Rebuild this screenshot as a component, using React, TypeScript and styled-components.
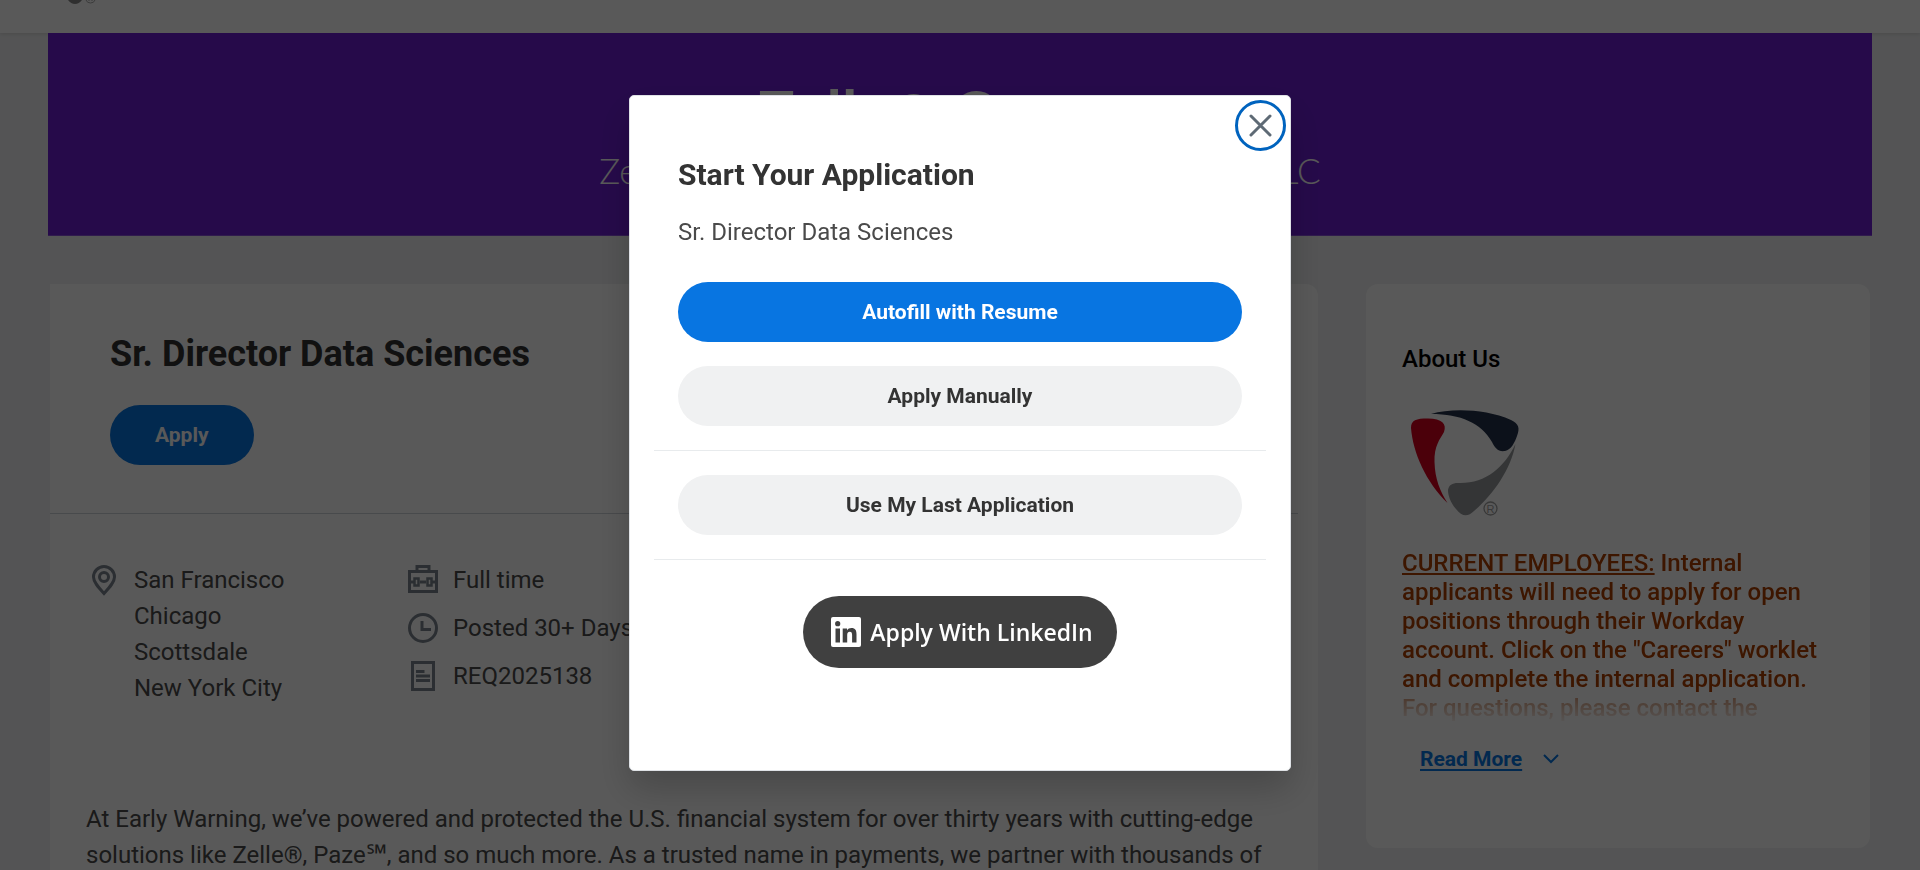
import React from "react";
import styled, { createGlobalStyle } from "styled-components";

const GlobalStyle = createGlobalStyle`
  *, *::before, *::after { box-sizing: border-box; }
  html, body, #root { height: 100%; }
  body {
    margin: 0;
    overflow: hidden;
    background: #f0f1f2;
    color: #4a4a4a;
    font: 400 24px/36px Roboto, "Liberation Sans", sans-serif;
  }
  h1, h2, h3, p, ul { margin: 0; padding: 0; }
  ul { list-style: none; }
  button { font-family: inherit; cursor: pointer; }
`;

const Page = styled.div`
  height: 100%;
  overflow: hidden;
`;

const Header = styled.header`
  height: 33px;
  padding-left: 64px;
  background: #fff;
  box-shadow: 0 1px 4px rgba(0, 0, 0, 0.12);
`;

const HeaderMark = styled.svg`
  display: block;
`;

const Banner = styled.section`
  height: 203px;
  margin: 0 48px;
  padding-top: 42px;
  background: #6d1ed4;
  border-bottom: 1px solid #8a4fdc;
  color: #fff;
  text-align: center;
`;

const BannerTitle = styled.h1`
  font: 700 62px/72px Lato, sans-serif;
`;

const Registered = styled.span`
  font-size: 56px;
  line-height: 1;
`;

const BannerText = styled.p`
  font: 300 35px/46px Lato, sans-serif;
`;

const Columns = styled.div`
  display: grid;
  grid-template-columns: minmax(0, 1268fr) minmax(0, 504fr);
  align-items: start;
  gap: 48px;
  padding: 48px 50px 0;
`;

const JobCard = styled.main`
  background: #fff;
  border-radius: 0 12px 0 0;
`;

const JobHeader = styled.div`
  height: 230px;
  margin-right: 20px;
  padding: 46px 60px 0;
  border-bottom: 1px solid #ced3d9;
`;

const JobTitle = styled.h2`
  margin-bottom: 27px;
  color: #333;
  font-size: 36px;
  font-weight: 700;
  line-height: 48px;
`;

const Pill = styled.button<{ $primary?: boolean; $wide?: boolean }>`
  display: block;
  width: ${(p) => (p.$wide ? "100%" : "auto")};
  height: 60px;
  padding: 0 45px;
  border: 0;
  border-radius: 30px;
  background: ${(p) => (p.$primary ? "#0875e1" : "#f0f1f2")};
  color: ${(p) => (p.$primary ? "#fff" : "#333")};
  font-size: 21px;
  font-weight: 700;
`;

const Facts = styled.div`
  display: flex;
  padding: 48px 36px 95px;
`;

const FactColumn = styled.ul`
  display: flex;
  flex-direction: column;
  gap: 12px;
  width: 319px;
`;

const Fact = styled.li`
  display: flex;
  gap: 12px;
  white-space: nowrap;
`;

const FactIcon = styled.svg`
  flex: none;
  width: 36px;
  height: 36px;
  fill: none;
  stroke: #7b858f;
  stroke-width: 3;
`;

const Body = styled.p`
  padding: 0 36px;
`;

const ServiceMark = styled.span`
  font-family: "DejaVu Serif", serif;
  font-size: 26px;
  line-height: 1;
`;

const Sidebar = styled.aside`
  height: 564px;
  padding: 57px 36px;
  background: #fff;
  border-radius: 12px;
`;

const SideTitle = styled.h3`
  margin-bottom: 24px;
  color: #000;
  font-size: 24px;
  font-weight: 500;
`;

const SideLogo = styled.svg`
  display: block;
  width: 150px;
  height: 130px;
  margin-bottom: 18px;
`;

const Notice = styled.p`
  height: 180px;
  margin-bottom: 12px;
  overflow: hidden;
  color: #b04000;
  font-weight: 500;
  line-height: 29px;
  mask-image: linear-gradient(#000 143px, rgba(0, 0, 0, 0.5) 148px, transparent 176px);
`;

const ReadMore = styled.button`
  display: flex;
  align-items: center;
  gap: 20px;
  height: 36px;
  padding: 0 18px;
  border: 0;
  background: none;
  color: #0875e1;
  font-size: 21px;
  font-weight: 700;
  text-decoration: underline;
  text-decoration-thickness: 2px;
  text-underline-offset: 3px;
`;

const Overlay = styled.div`
  position: fixed;
  inset: 0;
  display: flex;
  align-items: flex-start;
  justify-content: center;
  padding-top: 95px;
  background: rgba(0, 0, 0, 0.65);
`;

const Dialog = styled.div`
  position: relative;
  width: 662px;
  padding: 59px 48px 102px;
  border: 1px solid #dfe2e6;
  border-radius: 5px;
  background: #fff;
  box-shadow: 0 18px 36px rgba(0, 0, 0, 0.2);
`;

const CloseButton = styled.button`
  position: absolute;
  top: 4px;
  right: 4px;
  display: grid;
  place-items: center;
  width: 51px;
  height: 51px;
  padding: 0;
  border: 3px solid #0063be;
  border-radius: 50%;
  background: #fff;
`;

const DialogTitle = styled.h2`
  margin-bottom: 19px;
  color: #333;
  font-size: 30px;
  font-weight: 700;
  line-height: 40px;
`;

const Choices = styled.div`
  display: flex;
  flex-direction: column;
  gap: 24px;
  margin-top: 32px;
`;

const Divider = styled.hr`
  width: 612px;
  height: 1px;
  margin: 0 -24px;
  border: 0;
  background: #e8ebed;
`;

const LinkedInButton = styled.button`
  display: flex;
  align-items: center;
  align-self: center;
  gap: 9px;
  height: 72px;
  margin-top: 12px;
  padding: 0 24px 0 28px;
  border: 0;
  border-radius: 36px;
  background: #404040;
  color: #fff;
  font: 600 23px/30px "Open Sans", sans-serif;
`;

const cities = ["San Francisco", "Chicago", "Scottsdale", "New York City"];

const PinIcon = () => (
  <FactIcon viewBox="0 0 36 36" aria-hidden="true">
    <path d="M18 31.500C12 25 7.500 20 7.500 15a10.500 10.500 0 0 1 21 0C28.500 20 24 25 18 31.500Z" />
    <circle cx="18" cy="15" r="4.500" />
  </FactIcon>
);

const BriefcaseIcon = () => (
  <FactIcon viewBox="0 0 36 36" aria-hidden="true">
    <path d="M4.500 9.500h27v20h-27zM12 9V4.500h12V9M4 20h6M15 20h6M26 20h6" />
    <path d="M9.500 16.500h4v7h-4zM22.500 16.500h4v7h-4z" strokeWidth="2.500" />
  </FactIcon>
);

const ClockIcon = () => (
  <FactIcon viewBox="0 0 36 36" aria-hidden="true">
    <circle cx="18" cy="18" r="13.500" />
    <path d="M17 11v8.500h9" />
  </FactIcon>
);

const DocumentIcon = () => (
  <FactIcon viewBox="0 0 36 36" aria-hidden="true">
    <path d="M7.500 4.500h21v27h-21zM11 13.500h8.500M11 18h14M11 22.500h14" />
  </FactIcon>
);

const CompanyLogo = () => (
  <SideLogo viewBox="12 1 150 130" role="img" aria-label="Early Warning">
    <path fill="#d8001f" d="M21 28C21 20 26 18.500 38 18.500C52 18.500 57 24 54 32C50 39 44 46 44.500 62C45 79 50 91 57.500 103C36 82 23 53 21 28Z" />
    <path fill="#24324c" d="M41 14C62 8 96 9 121 20C129 24 130 28 127 36C125 42 121 50 115 51C108 52 105 48 102 42C91 23 71 14 41 14Z" />
    <path fill="#96999c" d="M125.500 44C121 69 103 95 84 111C78 117 72 117 66 109C60 102 58 95 58 90C59 85 62 83 68 83C95 84 114 68 125.500 44Z" />
    <circle cx="100.500" cy="108.500" r="6.500" fill="none" stroke="#a0a0a0" strokeWidth="1.300" />
    <text x="100.500" y="112.500" fill="#a0a0a0" fontFamily="Liberation Sans" fontSize="11" textAnchor="middle">R</text>
  </SideLogo>
);

export default function App() {
  return (
    <>
      <GlobalStyle />
      <Page>
        <Header>
          <HeaderMark width="40" height="6" aria-hidden="true">
            <path d="M4 0h14q-3 4-7 4t-7-4Z" fill="#888" />
            <path d="M22 0q1 3 4.500 3t4.500-3M25 0v1M28 0v1" fill="none" stroke="#aaa" />
          </HeaderMark>
        </Header>
        <Banner>
          <BannerTitle>Zelle<Registered>®</Registered> Careers</BannerTitle>
          <BannerText>Zelle is operated by Early Warning Services, LLC</BannerText>
        </Banner>
        <Columns>
          <JobCard>
            <JobHeader>
              <JobTitle>Sr. Director Data Sciences</JobTitle>
              <Pill type="button" $primary>Apply</Pill>
            </JobHeader>
            <Facts>
              <FactColumn>
                <Fact>
                  <PinIcon />
                  <ul>
                    {cities.map((city) => (
                      <li key={city}>{city}</li>
                    ))}
                  </ul>
                </Fact>
              </FactColumn>
              <FactColumn>
                <Fact><BriefcaseIcon />Full time</Fact>
                <Fact><ClockIcon />Posted 30+ Days Ago</Fact>
                <Fact><DocumentIcon />REQ2025138</Fact>
              </FactColumn>
            </Facts>
            <Body>
              At Early Warning, we’ve powered and protected the U.S. financial system for over thirty
              years with cutting-edge solutions like Zelle®, Paze<ServiceMark>℠</ServiceMark>, and so
              much more. As a trusted name in payments, we partner with thousands of
            </Body>
          </JobCard>
          <Sidebar>
            <SideTitle>About Us</SideTitle>
            <CompanyLogo />
            <Notice>
              <u>CURRENT EMPLOYEES:</u> Internal applicants will need to apply for open positions
              through their Workday account. Click on the "Careers" worklet and complete the internal
              application. For questions, please contact the
            </Notice>
            <ReadMore type="button">
              Read More
              <svg width="18" height="18" fill="none" stroke="currentColor" strokeWidth="2" aria-hidden="true">
                <path d="M2 5l7 7 7-7" />
              </svg>
            </ReadMore>
          </Sidebar>
        </Columns>
      </Page>
      <Overlay>
        <Dialog role="dialog" aria-modal="true" aria-labelledby="dialog-title">
          <CloseButton type="button" aria-label="Close">
            <svg width="23" height="23" fill="none" stroke="#5e6a75" strokeWidth="3" strokeLinecap="round" aria-hidden="true">
              <path d="M2 2l19 19M21 2L2 21" />
            </svg>
          </CloseButton>
          <DialogTitle id="dialog-title">Start Your Application</DialogTitle>
          <p>Sr. Director Data Sciences</p>
          <Choices>
            <Pill type="button" $primary $wide>Autofill with Resume</Pill>
            <Pill type="button" $wide>Apply Manually</Pill>
            <Divider />
            <Pill type="button" $wide>Use My Last Application</Pill>
            <Divider />
            <LinkedInButton type="button">
              <svg width="30" height="30" viewBox="0 0 30 30" aria-hidden="true">
                <rect width="30" height="30" rx="2" fill="#fff" />
                <g fill="#404040">
                  <circle cx="6.700" cy="6.700" r="2.600" />
                  <path d="M4.500 11.500h4.500V25.500H4.500zM11.700 11.500h4.300v2c1-1.600 2.500-2.400 4.400-2.400 4 0 5.100 2.500 5.100 6.200v8.200h-4.400v-7.300c0-1.900-.3-3.500-2.300-3.500s-2.600 1.500-2.600 3.500v7.300h-4.500z" />
                </g>
              </svg>
              Apply With LinkedIn
            </LinkedInButton>
          </Choices>
        </Dialog>
      </Overlay>
    </>
  );
}
